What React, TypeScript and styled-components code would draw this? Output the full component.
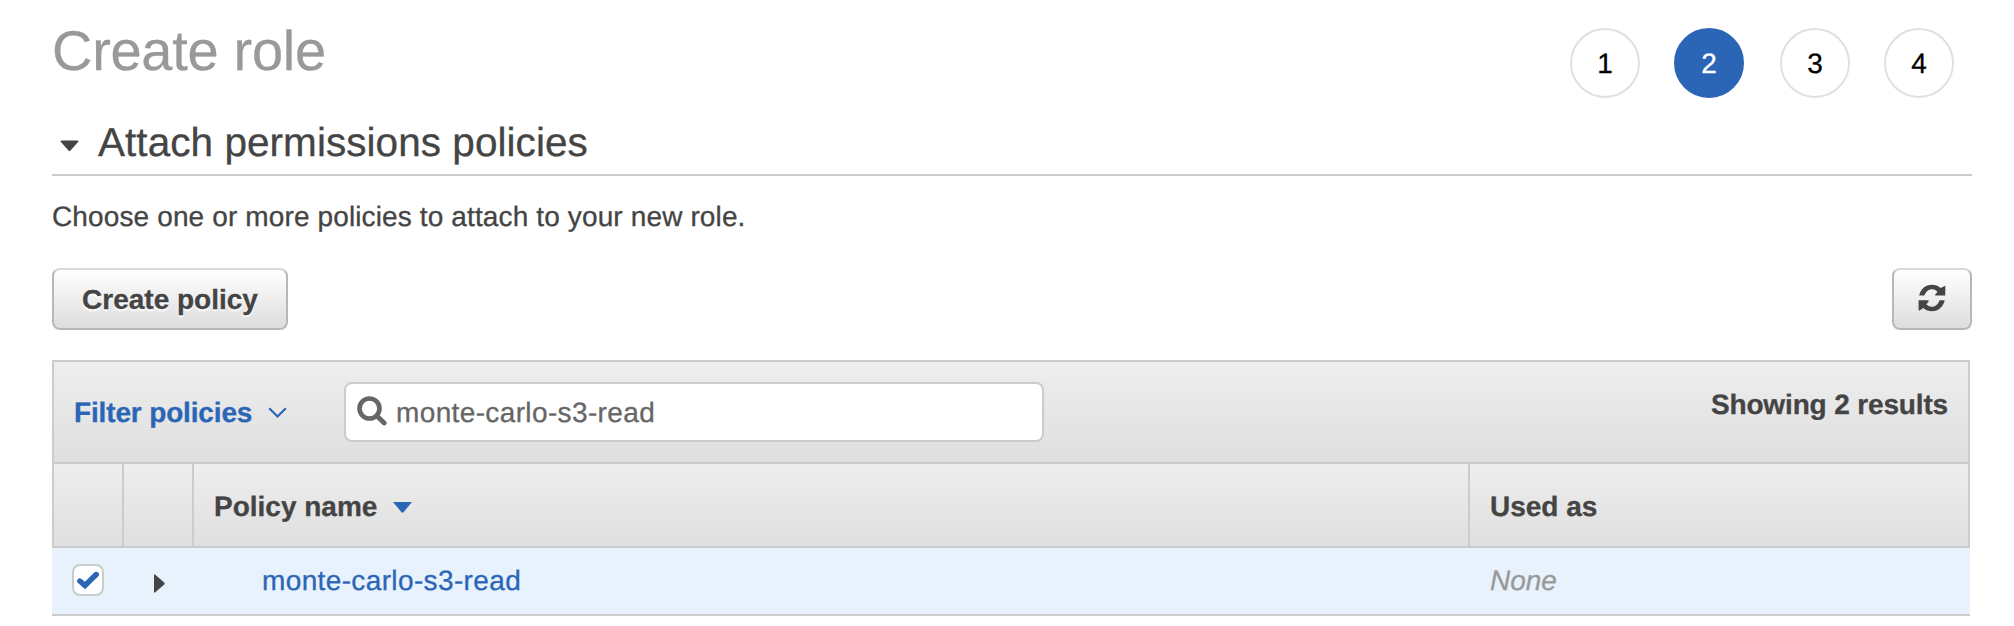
import React from "react";
import styled, { createGlobalStyle } from "styled-components";

const Global = createGlobalStyle`
  *, *::before, *::after { box-sizing: border-box; }
  body {
    margin: 0;
    background: #fff;
    color: #444;
    font: 28px/32px "Liberation Sans", Arial, sans-serif;
    text-rendering: geometricPrecision;
    -webkit-text-stroke: 0.3px;
  }
`;

const BORDER = "#ccc";
const BLUE = "#2b65b6";

const Page = styled.main`
  width: 2014px;
  height: 626px;
  padding: 0 42px 0 52px;
  overflow: hidden;
`;

const Header = styled.header`
  display: flex;
  justify-content: space-between;
  align-items: flex-start;
  height: 112px;
`;

const Title = styled.h1`
  margin: 19px 0 0;
  font-size: 56px;
  line-height: 64px;
  font-weight: 400;
  letter-spacing: -0.3px;
  color: #999;
`;

const Steps = styled.ol`
  display: flex;
  margin: 28px 18px 0 0;
  padding: 0;
  list-style: none;
`;

const Step = styled.li<{ $active?: boolean }>`
  display: flex;
  align-items: center;
  justify-content: center;
  width: 70px;
  height: 70px;
  margin-left: 34px;
  margin-right: ${(p) => (p.$active ? 2 : 0)}px;
  padding-top: 2px;
  border: 2px solid ${(p) => (p.$active ? BLUE : "#e0e0e0")};
  border-radius: 50%;
  background: ${(p) => (p.$active ? BLUE : "#fff")};
  color: ${(p) => (p.$active ? "#fff" : "#000")};
`;

const SectionHeading = styled.div`
  display: flex;
  align-items: center;
  height: 64px;
  padding: 0 0 2px 8px;
  border-bottom: 2px solid ${BORDER};
`;

const SectionTitle = styled.h2`
  margin: 0 0 0 19px;
  font-size: 40.500px;
  line-height: 46px;
  font-weight: 400;
  letter-spacing: 0.05px;
`;

const HeadingCaret = styled.svg`
  margin-top: 8px;
`;

const Intro = styled.p`
  margin: 25px 0 35px;
  letter-spacing: 0.13px;
`;

const Actions = styled.div`
  display: flex;
  justify-content: space-between;
  height: 62px;
  margin-bottom: 30px;
`;

const Button = styled.button<{ $width: number }>`
  display: flex;
  align-items: center;
  justify-content: center;
  width: ${(p) => p.$width}px;
  height: 62px;
  padding: 2px 0 0;
  border: 2px solid #b8b8b8;
  border-top-color: #d8d8d8;
  border-radius: 8px;
  background: linear-gradient(#fff, #ddd);
  color: #444;
  font: bold 28px/32px "Liberation Sans", Arial, sans-serif;
  text-shadow: 0 2px 2px #fff;
`;

const Panel = styled.section`
  width: 1918px;
`;

const FilterBar = styled.div`
  display: flex;
  align-items: center;
  height: 104px;
  padding: 0 20px;
  border: 2px solid ${BORDER};
  background: linear-gradient(#eee, #dfdfdf);
`;

const FilterLink = styled.a`
  display: flex;
  align-items: center;
  width: 270px;
  padding-top: 2px;
  gap: 16px;
  color: ${BLUE};
  font-weight: 700;
  letter-spacing: -0.15px;
`;

const SearchBox = styled.label`
  display: flex;
  align-items: center;
  width: 700px;
  height: 60px;
  padding-left: 11px;
  gap: 9px;
  border: 2px solid ${BORDER};
  border-radius: 8px;
  background: #fff;
  color: #666;
  letter-spacing: 0.37px;

  svg {
    margin-bottom: 2px;
  }
`;

const SearchText = styled.span`
  padding-top: 2px;
`;

const Results = styled.div`
  margin: 0 0 14px auto;
  font-weight: 700;
  letter-spacing: -0.15px;
`;

const Columns = styled.div`
  display: grid;
  grid-template-columns: 70px 70px 1276px 1fr;
`;

const HeadRow = styled(Columns)`
  height: 84px;
  border: 2px solid ${BORDER};
  border-top: 0;
  background: linear-gradient(#eee, #dfdfdf);
  font-weight: 700;
`;

const HeadCell = styled.div`
  display: flex;
  align-items: center;
  gap: 16px;
  padding: 4px 0 0 20px;
  border-right: 2px solid ${BORDER};

  &:last-child {
    border-right: 0;
  }
`;

const Row = styled(Columns)`
  height: 68px;
  padding-left: 2px;
  border-bottom: 2px solid ${BORDER};
  background: #e7f2fd;
`;

const Cell = styled.div<{ $inset: number }>`
  display: flex;
  align-items: center;
  padding-left: ${(p) => p.$inset}px;
`;

const Checkbox = styled.span`
  display: flex;
  align-items: center;
  justify-content: center;
  width: 32px;
  height: 32px;
  margin-bottom: 2px;
  border: 2px solid ${BORDER};
  border-radius: 8px;
  background: #fff;
`;

const Expander = styled.svg`
  margin-top: 4px;
`;

const PolicyLink = styled.a`
  color: ${BLUE};
  letter-spacing: 0.37px;
`;

const None = styled.em`
  color: #999;
`;

const SearchIcon = () => (
  <svg width="30" height="30" viewBox="0 0 30 30" fill="none" stroke="#666" strokeLinecap="round">
    <circle cx="12.5" cy="12.5" r="10" strokeWidth="4.6" />
    <path d="M20.2 20.2 27.2 27" strokeWidth="4.8" />
  </svg>
);

const ButtonIcon = styled.svg`
  margin-bottom: 4px;
`;

const RefreshIcon = () => (
  <ButtonIcon width="28" height="28" viewBox="0 0 28 28">
    <path
      fill="#444"
      d="M1.200 11.600C2.400 5.400 7.300.7 14 .7c3.200 0 6.200 1.100 8.500 3.200L27.300 1.800V11.600H17.200V10.400L19.600 7.700C18 6 16 5.200 14 5.200c-3.700 0-6.200 2.600-7.600 6.400z"
    />
    <path
      fill="#444"
      d="M26.700 16.200C25.500 22.400 20.600 27.200 13.900 27.200c-3.200 0-6.200-1.200-8.500-3.300L1.600 26.500Q.6 26.900.6 25.800V16.200H10.100Q11.300 16.800 10.500 17.700L8.300 20.200C9.900 21.900 11.900 22.700 13.900 22.700c3.700 0 6.200-2.600 7.600-6.500z"
    />
  </ButtonIcon>
);

export default function App() {
  return (
    <>
      <Global />
      <Page>
        <Header>
          <Title>Create role</Title>
          <Steps>
            {[1, 2, 3, 4].map((n) => (
              <Step key={n} $active={n === 2}>
                {n}
              </Step>
            ))}
          </Steps>
        </Header>

        <SectionHeading>
          <HeadingCaret width="19" height="12" viewBox="0 0 19 12">
            <path d="M.5 1.500Q.5.5 1.500.5h16q1 0 1 1L10.500 10.500q-1 1-2 0z" fill="#444" />
          </HeadingCaret>
          <SectionTitle>Attach permissions policies</SectionTitle>
        </SectionHeading>
        <Intro>Choose one or more policies to attach to your new role.</Intro>

        <Actions>
          <Button $width={236}>Create policy</Button>
          <Button $width={80} aria-label="Refresh">
            <RefreshIcon />
          </Button>
        </Actions>

        <Panel>
          <FilterBar>
            <FilterLink>
              Filter policies
              <svg width="19" height="12" viewBox="0 0 19 12">
                <path d="M1.200 1.200 9.500 9.500 17.800 1.200" fill="none" stroke={BLUE} strokeWidth="2.200" />
              </svg>
            </FilterLink>
            <SearchBox>
              <SearchIcon />
              <SearchText>monte-carlo-s3-read</SearchText>
            </SearchBox>
            <Results>Showing 2 results</Results>
          </FilterBar>

          <HeadRow>
            <HeadCell />
            <HeadCell />
            <HeadCell>
              Policy name
              <svg width="19" height="11" viewBox="0 0 19 11">
                <path d="M0 0h19l-8.500 10.200q-1 .9-2 0z" fill={BLUE} />
              </svg>
            </HeadCell>
            <HeadCell>Used as</HeadCell>
          </HeadRow>

          <Row>
            <Cell $inset={18}>
              <Checkbox>
                <svg width="22" height="20" viewBox="0 0 22 20">
                  <path d="M2.800 11 8 15.500 19.200 4.500" fill="none" stroke={BLUE} strokeWidth="5.400" strokeLinecap="round" />
                </svg>
              </Checkbox>
            </Cell>
            <Cell $inset={30}>
              <Expander width="11" height="19" viewBox="0 0 11 19">
                <path d="M0 1.200Q0-.3 1.300.8L10.200 8.600q.9.900 0 1.800L1.300 18.200Q0 19.300 0 17.800z" fill="#444" />
              </Expander>
            </Cell>
            <Cell $inset={68}>
              <PolicyLink>monte-carlo-s3-read</PolicyLink>
            </Cell>
            <Cell $inset={20}>
              <None>None</None>
            </Cell>
          </Row>
        </Panel>
      </Page>
    </>
  );
}
